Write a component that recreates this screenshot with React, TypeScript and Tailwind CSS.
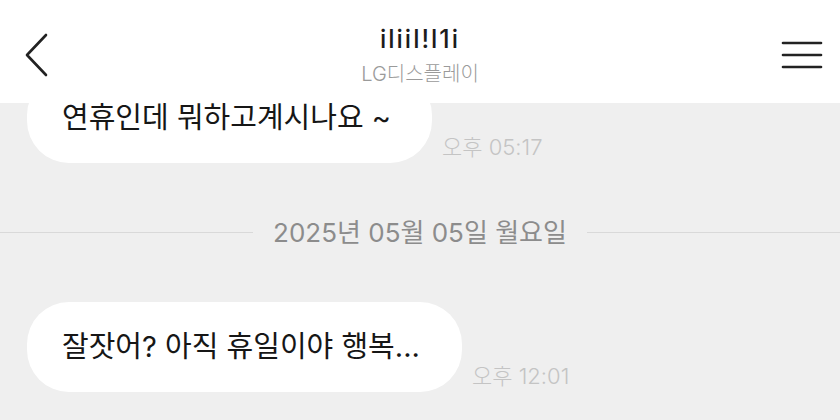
import { useState } from 'react';

type Message = { id: number; text: string; time: string; width: string };

const FONT = "font-[Inter,'Noto_Sans_CJK_KR',sans-serif]";

function Bubble({ msg }: { msg: Message }) {
  return (
    <div className="flex items-end gap-[10px] pl-[27px]">
      <div className={`h-[90px] ${msg.width} flex items-center px-[35px] bg-white rounded-[42px] text-[29px] text-[#161616] whitespace-nowrap`}>
        {msg.text}
      </div>
      <span className="pb-[3px] text-[22px] leading-[26px] font-light text-[#c4c4c4] whitespace-nowrap">{msg.time}</span>
    </div>
  );
}

export default function App() {
  const [messages] = useState<Message[]>([
    { id: 1, text: '연휴인데 뭐하고계시나요 ~', time: '오후 05:17', width: 'w-[405px]' },
    { id: 2, text: '잘잣어? 아직 휴일이야 행복...', time: '오후 12:01', width: 'w-[435px]' },
  ]);

  return (
    <div className={`w-[840px] h-[420px] overflow-hidden bg-[#efefef] ${FONT}`}>
      {/* Header */}
      <header className="relative z-10 h-[103px] bg-white grid grid-cols-[1fr_auto_1fr]">
        <div className="pl-[25px] pt-[33px]">
          <svg width="26" height="46" viewBox="0 0 26 46" fill="none" stroke="#222" strokeWidth="2.6" strokeLinecap="round" strokeLinejoin="round">
            <path d="M21 2 L2 22 L21 42" />
          </svg>
        </div>
        <div className="flex flex-col items-center pt-[24px]">
          <div className="text-[25px] leading-[30px] font-medium tracking-[2px] text-[#1c1c1c]">iliil!l1i</div>
          <div className="mt-[8px] text-[20px] leading-[24px] font-light text-[#9a9a9a]">LG디스플레이</div>
        </div>
        <div className="flex justify-end pr-[17px] pt-[41px]">
          <svg width="42" height="28" viewBox="0 0 42 28" fill="none" stroke="#222" strokeWidth="2.6" strokeLinecap="round">
            <path d="M2 2 H40" />
            <path d="M2 14 H40" />
            <path d="M2 26 H40" />
          </svg>
        </div>
      </header>

      {/* Messages */}
      <div className="-mt-[30px] flex flex-col">
        <Bubble msg={messages[0]} />

        <div className="h-[139px] flex items-center gap-[20px]">
          <div className="flex-1 h-px bg-[#d9d9d9]" />
          <span className="text-[26px] text-[#8c8c8c] whitespace-nowrap">2025년 05월 05일 월요일</span>
          <div className="flex-1 h-px bg-[#d9d9d9]" />
        </div>

        <Bubble msg={messages[1]} />
      </div>
    </div>
  );
}
